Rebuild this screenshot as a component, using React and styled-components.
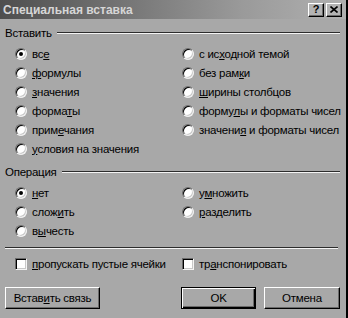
import React from "react"
import styled, { createGlobalStyle } from "styled-components"

const Global = createGlobalStyle`
  html, body {
    margin: 0;
    padding: 0;
    background: #a8a8a8;
  }
  body {
    font-family: "Liberation Sans", Arial, sans-serif;
    font-size: 11.5px;
    letter-spacing: -0.25px;
    color: #000;
  }
`

const Window = styled.div`
  width: 346px;
  height: 318px;
  background: #a8a8a8;
  border-right: 2px solid #000;
  display: flex;
  flex-direction: column;
  overflow: hidden;
`

const TitleBar = styled.div`
  height: 19px;
  display: flex;
  align-items: center;
  padding: 0 4px 0 3px;
  background: linear-gradient(to right, #4e4e4e, #9a9a9a 70%, #b0b0b0);
`

const Title = styled.div`
  flex: 1;
  color: #d6d6d6;
  font-weight: bold;
  font-size: 12px;
  letter-spacing: 0;
`

const CapButton = styled.div`
  width: 14px;
  height: 12px;
  margin-left: ${({ $gap }) => $gap || 0}px;
  background: #b4b4b4;
  border-top: 1px solid #fff;
  border-left: 1px solid #fff;
  border-right: 1px solid #000;
  border-bottom: 1px solid #000;
  box-shadow: inset -1px -1px #6c6c6c;
  display: flex;
  align-items: center;
  justify-content: center;
  font-weight: bold;
  font-size: 11px;
  line-height: 1;
`

const Body = styled.div`
  display: flex;
  flex-direction: column;
  padding: 0 6px 0 5px;
`

const GroupHeader = styled.div`
  height: 14px;
  margin-top: 7px;
  display: flex;
  align-items: center;
  gap: 5px;
`

const Etch = styled.div`
  flex: 1;
  height: 0;
  border-top: 1px solid #2c2c2c;
  border-bottom: 1px solid #f4f4f4;
`

const Options = styled.div`
  display: grid;
  grid-template-columns: 167px 1fr;
  grid-auto-flow: column;
  grid-template-rows: repeat(${({ $rows }) => $rows}, 19px);
  padding: 4px 0 0 10px;
`

const OptionRow = styled.label`
  display: flex;
  align-items: center;
  gap: 5px;
  white-space: nowrap;
`

const RadioDot = styled.span`
  width: 12px;
  height: 12px;
  box-sizing: border-box;
  border-radius: 50%;
  background: #fff;
  border: 1px solid;
  border-color: #6a6a6a #f0f0f0 #f0f0f0 #6a6a6a;
  box-shadow: inset 1px 1px #000, inset -1px -1px #c8c8c8;
  display: flex;
  align-items: center;
  justify-content: center;
  flex: none;

  &::after {
    content: "";
    width: 4px;
    height: 4px;
    border-radius: 50%;
    background: #000;
    display: ${({ $on }) => ($on ? "block" : "none")};
  }
`

const Box = styled.span`
  width: 12px;
  height: 12px;
  box-sizing: border-box;
  background: #fff;
  border: 1px solid;
  border-color: #6a6a6a #f4f4f4 #f4f4f4 #6a6a6a;
  box-shadow: inset 1px 1px #000, inset -1px -1px #c8c8c8;
  flex: none;
`

const Separator = styled(Etch)`
  flex: none;
  margin: 7px 2px 0 0;
`

const Checks = styled.div`
  display: grid;
  grid-template-columns: 167px 1fr;
  height: 19px;
  margin-top: 5px;
  padding-left: 10px;
`

const Buttons = styled.div`
  display: flex;
  margin-top: 14px;
`

const Button = styled.div`
  width: ${({ $w }) => $w}px;
  height: 22px;
  box-sizing: border-box;
  margin-left: ${({ $gap }) => $gap || 0}px;
  display: flex;
  align-items: center;
  justify-content: center;
  background: #a8a8a8;
  border: 1px solid;
  border-color: ${({ $default }) =>
    $default ? "#000" : "#fff #000 #000 #fff"};
  box-shadow: ${({ $default }) =>
    $default
      ? "inset 1px 1px #fff, inset -1px -1px #000, inset -2px -2px #6a6a6a"
      : "inset -1px -1px #6a6a6a"};
`

const U = styled.span`
  text-decoration: underline;
  text-underline-offset: 1px;
`

// label text with one underlined accelerator letter
const Acc = ({ text, at }) => (
  <>
    {text.slice(0, at)}
    <U>{text[at]}</U>
    {text.slice(at + 1)}
  </>
)

const pasteOptions = [
  ["все", 2, true],
  ["формулы", 0],
  ["значения", 0],
  ["форматы", 5],
  ["примечания", 4],
  ["условия на значения", 0],
  ["с исходной темой", 4],
  ["без рамки", 7],
  ["ширины столбцов", 0],
  ["формулы и форматы чисел", 5],
  ["значения и форматы чисел", 7],
]

const opOptions = [
  ["нет", 0, true],
  ["сложить", 4],
  ["вычесть", 1],
  ["умножить", 1],
  ["разделить", 0],
]

function RadioList({ items, rows }) {
  return (
    <Options $rows={rows}>
      {items.map(([text, at, on]) => (
        <OptionRow key={text}>
          <RadioDot $on={on} />
          <span>
            <Acc text={text} at={at} />
          </span>
        </OptionRow>
      ))}
    </Options>
  )
}

export default function App() {
  return (
    <>
      <Global />
      <Window>
        <TitleBar>
          <Title>Специальная вставка</Title>
          <CapButton>?</CapButton>
          <CapButton $gap={2}>
            <svg width="8" height="7" viewBox="0 0 8 7">
              <path d="M0.5 0.5 L7.5 6.5 M7.5 0.5 L0.5 6.5" stroke="#000" strokeWidth="1.6" />
            </svg>
          </CapButton>
        </TitleBar>
        <Body>
          <GroupHeader>
            <span>Вставить</span>
            <Etch />
          </GroupHeader>
          <RadioList items={pasteOptions} rows={6} />
          <GroupHeader>
            <span>Операция</span>
            <Etch />
          </GroupHeader>
          <RadioList items={opOptions} rows={3} />
          <Separator />
          <Checks>
            <OptionRow>
              <Box />
              <span>
                <Acc text="пропускать пустые ячейки" at={0} />
              </span>
            </OptionRow>
            <OptionRow>
              <Box />
              <span>
                <Acc text="транспонировать" at={2} />
              </span>
            </OptionRow>
          </Checks>
          <Buttons>
            <Button $w={95}>
              <Acc text="Вставить связь" at={5} />
            </Button>
            <Button $w={75} $gap={81} $default>
              OK
            </Button>
            <Button $w={76} $gap={8}>
              Отмена
            </Button>
          </Buttons>
        </Body>
      </Window>
    </>
  )
}
